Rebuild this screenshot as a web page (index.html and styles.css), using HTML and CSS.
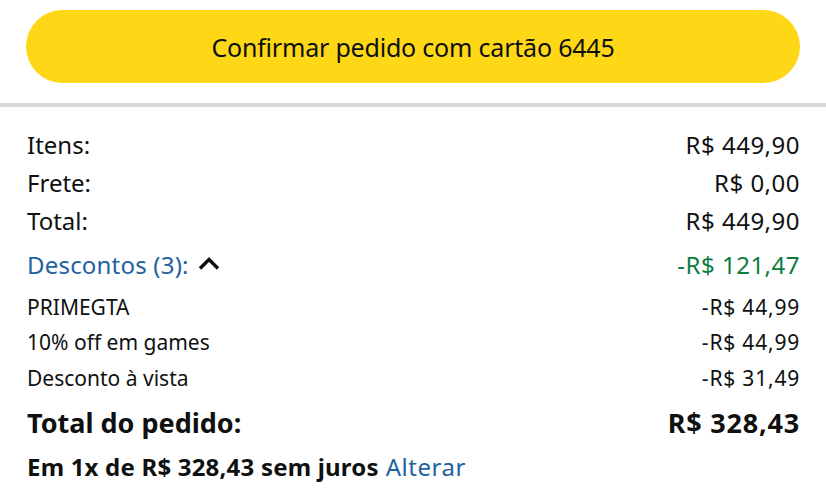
FILE: index.html
```html
<!DOCTYPE html>
<html lang="pt-BR">
<head>
<meta charset="utf-8">
<link rel="stylesheet" href="styles.css">
</head>
<body>
<div class="top">
  <button class="confirm">Confirmar pedido com cartão 6445</button>
</div>
<div class="divider"></div>
<div class="summary">
  <div class="row"><span>Itens:</span><span class="num">R$ 449,90</span></div>
  <div class="row"><span>Frete:</span><span class="num">R$ 0,00</span></div>
  <div class="row"><span>Total:</span><span class="num">R$ 449,90</span></div>
  <div class="row disc">
    <span class="disc-label">Descontos (3):
      <svg class="chev" width="24" height="16" viewBox="0 0 24 16"><path d="M3 13.5 L12 4.5 L21 13.5" fill="none" stroke="#111" stroke-width="3.4"/></svg>
    </span>
    <span class="green num">-R$ 121,47</span>
  </div>
  <div class="sub">
    <div class="row small"><span>PRIMEGTA</span><span class="num">-R$ 44,99</span></div>
    <div class="row small"><span>10% off em games</span><span class="num">-R$ 44,99</span></div>
    <div class="row small"><span>Desconto à vista</span><span class="num">-R$ 31,49</span></div>
  </div>
  <div class="row grand"><span>Total do pedido:</span><span class="num">R$ 328,43</span></div>
  <div class="installments"><b>Em 1x de R$ 328,43 sem juros</b> <a class="link">Alterar</a></div>
</div>
</body>
</html>
```
FILE: styles.css
```css
html, body {
  margin: 0;
  padding: 0;
  background: #fff;
  font-family: "Noto Sans", "Open Sans", sans-serif;
  color: #0f1111;
}
.top {
  padding: 10px 26px 20px 26px;
}
.confirm {
  display: block;
  width: 100%;
  height: 73px;
  border: none;
  border-radius: 37px;
  background: #fed716;
  font-family: "Noto Sans", sans-serif;
  font-size: 25px;
  color: #0f1111;
  letter-spacing: -0.2px;
  padding: 0;
}
.divider {
  height: 4px;
  background: #d5d9d9;
}
.summary {
  padding: 18px 26px 0 27px;
}
.row {
  display: flex;
  justify-content: space-between;
  align-items: center;
  font-size: 24px;
  height: 38px;
}
.num {
  letter-spacing: 0.5px;
}
.disc {
  height: 50px;
}
.disc-label {
  color: #2162a1;
  display: flex;
  align-items: center;
  letter-spacing: 0.2px;
}
.chev {
  margin-left: 8px;
  margin-top: -3px;
}
.green {
  color: #0b7b3e;
}
.row.small {
  font-size: 21px;
  height: 35.5px;
}
.row.small .num {
  letter-spacing: 0.8px;
}
.row.grand {
  font-size: 27px;
  font-weight: 700;
  height: 48px;
  margin-top: 3px;
}
.row.grand .num {
  letter-spacing: 0.8px;
}
.installments {
  font-size: 24px;
  height: 40px;
  display: flex;
  align-items: center;
}
.installments b {
  font-weight: 700;
  margin-right: 7px;
  letter-spacing: 0.2px;
}
.link {
  color: #2162a1;
  letter-spacing: 0.5px;
}
```
